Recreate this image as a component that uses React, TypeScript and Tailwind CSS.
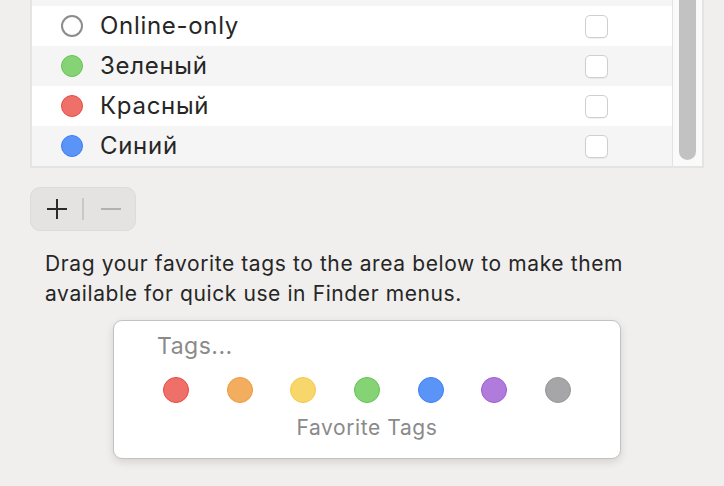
const rows = [
  { name: 'Online-only', dot: 'bg-white border-[#8c8c8c] border-2', bg: 'bg-white' },
  { name: 'Зеленый', dot: 'bg-[#85d375] border-[#62c553] border-[1.5px]', bg: 'bg-[#f4f5f4]' },
  { name: 'Красный', dot: 'bg-[#ee7068] border-[#e64a41] border-[1.5px]', bg: 'bg-white' },
  { name: 'Синий', dot: 'bg-[#5b94f7] border-[#3b7cf5] border-[1.5px]', bg: 'bg-[#f4f5f4]' },
];

const favorites = [
  'bg-[#ee7068] border-[#e64a41]',
  'bg-[#f2ad5e] border-[#ee9a3a]',
  'bg-[#f7d66b] border-[#f4c947]',
  'bg-[#85d375] border-[#5fc450]',
  'bg-[#5b94f7] border-[#3b7cf5]',
  'bg-[#b07bdb] border-[#9c5cd2]',
  'bg-[#a6a6a9] border-[#959598]',
];

function TagRow({ name, dot, bg }: { name: string; dot: string; bg: string }) {
  return (
    <div className={`flex h-[40px] items-center ${bg}`}>
      <div className={`ml-[29px] h-[22px] w-[22px] rounded-full ${dot}`} />
      <span className="ml-[17px] text-[24px] leading-none tracking-[0.7px] text-[#262626]">{name}</span>
      <div className="ml-auto mr-[64px] h-[23px] w-[23px] rounded-[5px] border border-[#cfcfcf] bg-white shadow-[0_1px_1px_rgba(0,0,0,0.06)]" />
    </div>
  );
}

export default function App() {
  return (
    <div
      className="h-[486px] w-[724px] overflow-hidden bg-[#f0efed]"
      style={{ fontFamily: 'Inter, "Noto Sans", sans-serif' }}
    >
      <div className="mt-[-36px] ml-[30px] flex w-[674px] border-2 border-[#e4e4e2]">
        <div className="flex flex-1 flex-col">
          <div className="h-[40px] bg-[#f4f5f4]" />
          {rows.map((r) => (
            <TagRow key={r.name} {...r} />
          ))}
        </div>
        <div className="w-px bg-[#e2e2e2]" />
        <div className="w-[29px] bg-[#fafafa] pl-[6px]">
          <div className="h-[194px] w-[17px] rounded-b-full bg-[#c2c2c2]" />
        </div>
      </div>

      <div className="mt-[19px] ml-[30px] flex h-[44px] w-[106px] items-center rounded-[10px] border border-[#dcdbd9] bg-[#e4e3e1]">
        <svg width="22" height="22" viewBox="0 0 22 22" className="ml-[15px]">
          <path d="M11 1v20M1 11h20" stroke="#2b2b2b" strokeWidth="2" />
        </svg>
        <div className="ml-[14px] h-[22px] w-[2px] bg-[#c9c8c6]" />
        <svg width="22" height="22" viewBox="0 0 22 22" className="ml-[16px]">
          <path d="M1 11h20" stroke="#b2b1af" strokeWidth="2" />
        </svg>
      </div>

      <p className="mt-[18px] ml-[45px] w-[640px] text-[21px] leading-[30px] tracking-[0.6px] text-[#262626]">
        Drag your favorite tags to the area below to make them
        <br />
        available for quick use in Finder menus.
      </p>

      <div className="mt-[11px] ml-[113px] h-[139px] w-[508px] rounded-[9px] border-[1.5px] border-[#c2c2c2] bg-white shadow-[0_3px_8px_rgba(0,0,0,0.12)]">
        <div className="ml-[43px] mt-[11px] text-[23px] leading-[28px] tracking-[0.5px] text-[#8a8a8a]">Tags...</div>
        <div className="ml-[49px] mt-[17px] flex gap-[37.7px]">
          {favorites.map((c, i) => (
            <div key={i} className={`h-[26px] w-[26px] rounded-full border-[1.5px] ${c}`} />
          ))}
        </div>
        <div className="mt-[12px] text-center text-[21px] leading-[26px] tracking-[0.6px] text-[#8a8a8a]">Favorite Tags</div>
      </div>
    </div>
  );
}
